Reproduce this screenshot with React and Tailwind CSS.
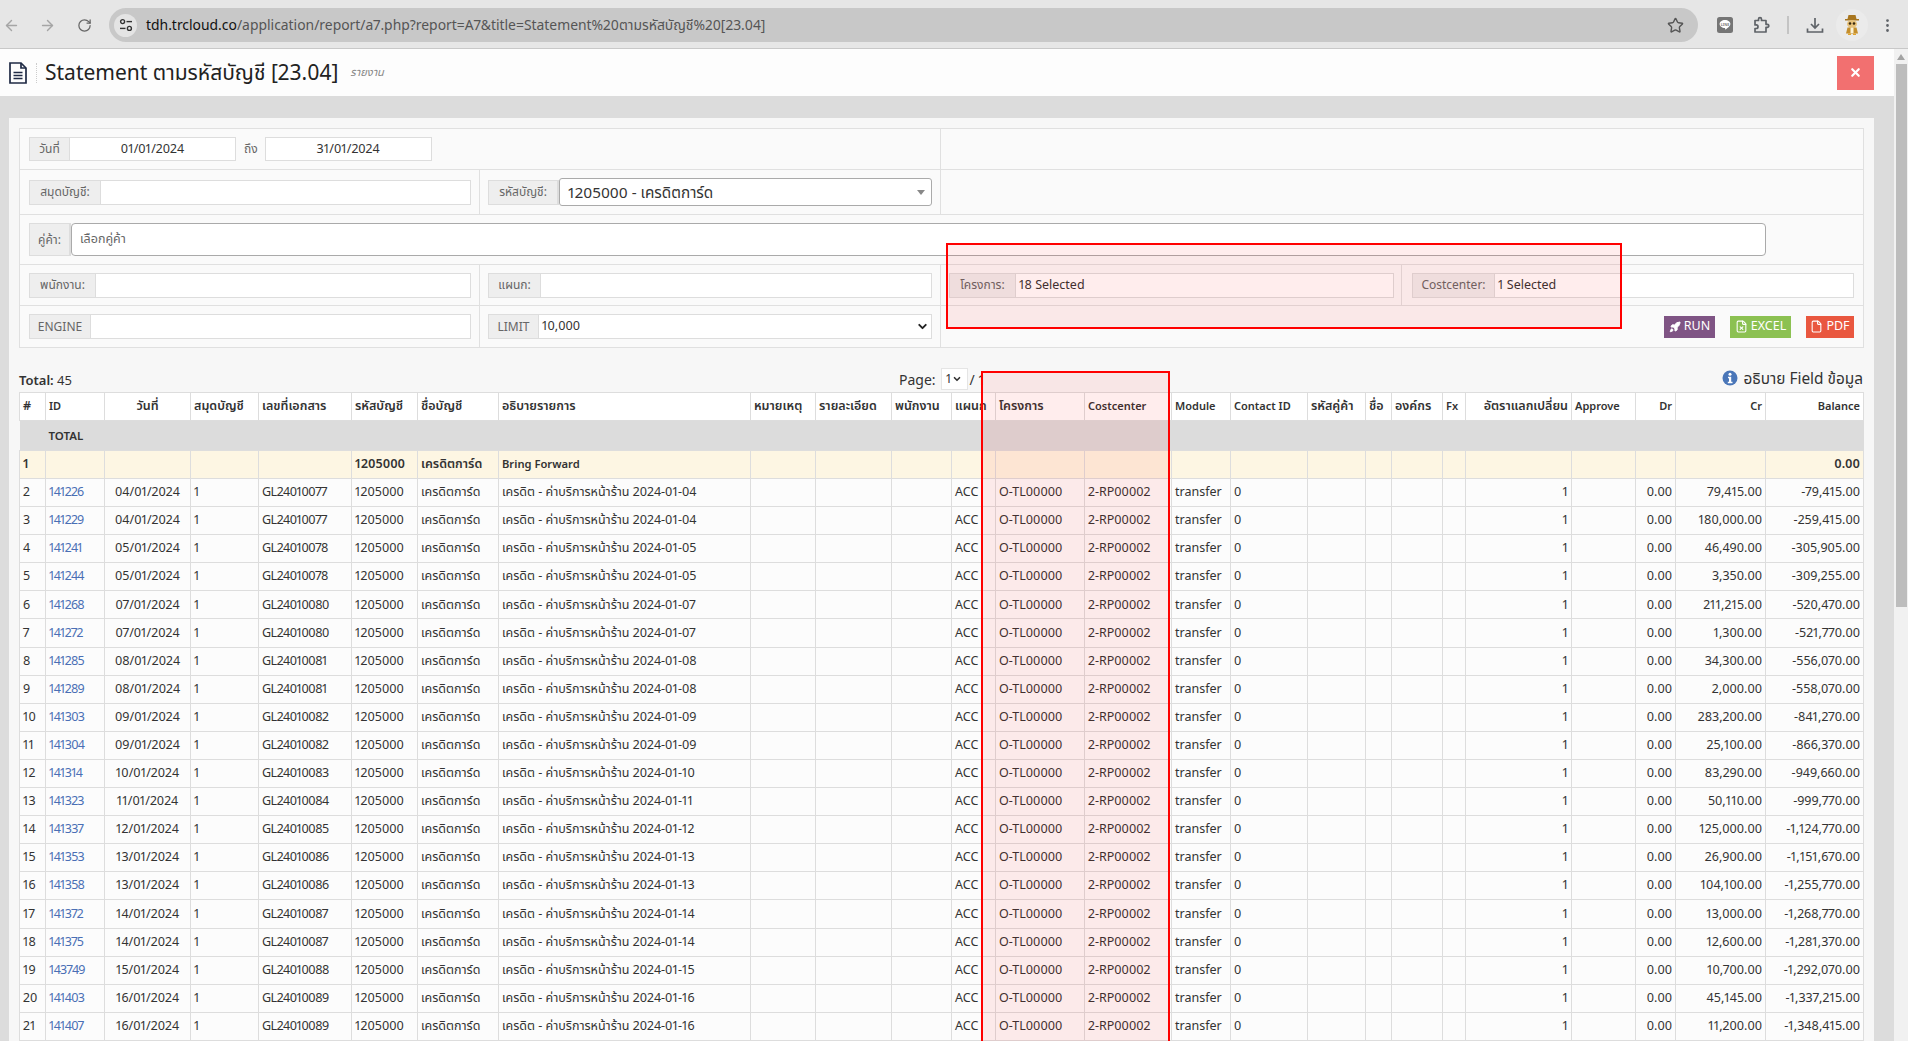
import React from "react";
import {
  ArrowLeft,
  ArrowRight,
  RotateCw,
  Star,
  EllipsisVertical,
  X,
  Rocket,
  FileX,
  File,
  ChevronDown,
} from "lucide-react";

const FONT = "[font-family:'Noto_Sans','Noto_Sans_Thai',sans-serif] proportional-nums";

const columns = [
  { label: "#", w: "w-[26px]" },
  { label: "ID", w: "w-[59px]", size: "text-[11px]" },
  { label: "วันที่", w: "w-[86px]", align: "text-center" },
  { label: "สมุดบัญชี", w: "w-[68px]" },
  { label: "เลขที่เอกสาร", w: "w-[93px]" },
  { label: "รหัสบัญชี", w: "w-[66px]" },
  { label: "ชื่อบัญชี", w: "w-[81px]" },
  { label: "อธิบายรายการ", w: "w-[252px]" },
  { label: "หมายเหตุ", w: "w-[65px]" },
  { label: "รายละเอียด", w: "w-[76px]" },
  { label: "พนักงาน", w: "w-[60px]" },
  { label: "แผนก", w: "w-[44px]" },
  { label: "โครงการ", w: "w-[89px]" },
  { label: "Costcenter", w: "w-[87px]", size: "text-[11px]" },
  { label: "Module", w: "w-[59px]", size: "text-[11px]" },
  { label: "Contact ID", w: "w-[77px]", size: "text-[11px]" },
  { label: "รหัสคู่ค้า", w: "w-[58px]" },
  { label: "ชื่อ", w: "w-[26px]" },
  { label: "องค์กร", w: "w-[51px]" },
  { label: "Fx", w: "w-[23px]", size: "text-[11px]" },
  { label: "อัตราแลกเปลี่ยน", w: "w-[106px]", align: "text-right" },
  { label: "Approve", w: "w-[64px]", size: "text-[11px]" },
  { label: "Dr", w: "w-[40px]", align: "text-right", size: "text-[11px]" },
  { label: "Cr", w: "w-[90px]", align: "text-right", size: "text-[11px]" },
  { label: "Balance", w: "w-[98px]", align: "text-right", size: "text-[11px]" },
];

// id, day, doc suffix, cr, balance
const rows = [
  ["141226", "04", "77", "79,415.00", "-79,415.00"],
  ["141229", "04", "77", "180,000.00", "-259,415.00"],
  ["141241", "05", "78", "46,490.00", "-305,905.00"],
  ["141244", "05", "78", "3,350.00", "-309,255.00"],
  ["141268", "07", "80", "211,215.00", "-520,470.00"],
  ["141272", "07", "80", "1,300.00", "-521,770.00"],
  ["141285", "08", "81", "34,300.00", "-556,070.00"],
  ["141289", "08", "81", "2,000.00", "-558,070.00"],
  ["141303", "09", "82", "283,200.00", "-841,270.00"],
  ["141304", "09", "82", "25,100.00", "-866,370.00"],
  ["141314", "10", "83", "83,290.00", "-949,660.00"],
  ["141323", "11", "84", "50,110.00", "-999,770.00"],
  ["141337", "12", "85", "125,000.00", "-1,124,770.00"],
  ["141353", "13", "86", "26,900.00", "-1,151,670.00"],
  ["141358", "13", "86", "104,100.00", "-1,255,770.00"],
  ["141372", "14", "87", "13,000.00", "-1,268,770.00"],
  ["141375", "14", "87", "12,600.00", "-1,281,370.00"],
  ["143749", "15", "88", "10,700.00", "-1,292,070.00"],
  ["141403", "16", "89", "45,145.00", "-1,337,215.00"],
  ["141407", "16", "89", "11,200.00", "-1,348,415.00"],
];

function Label({ children, w }) {
  return (
    <span className={`flex h-full shrink-0 items-center justify-center border-r border-[#ddd] bg-[#eee] text-[12px] text-[#666] ${w}`}>
      {children}
    </span>
  );
}

function Field({ label, w, h = "h-[25px]", children }) {
  return (
    <div className={`flex w-full items-stretch border border-[#ddd] bg-white ${h}`}>
      <Label w={w}>{label}</Label>
      <div className="flex min-w-0 flex-1 items-center pl-[3px] text-[12.5px] text-[#333]">
        {children}
      </div>
    </div>
  );
}

function Cell({ className = "", children }) {
  return <td className={`overflow-hidden border border-[#ddd] px-[3px] whitespace-nowrap ${className}`}>{children}</td>;
}

function TuneIcon() {
  return (
    <svg width="14" height="14" viewBox="0 0 14 14" fill="none" stroke="#333" strokeWidth="1.4">
      <circle cx="3.6" cy="3.6" r="2" />
      <path d="M7.5 3.6H13" />
      <path d="M1 10.4h5.5" />
      <circle cx="10.4" cy="10.4" r="2" />
    </svg>
  );
}

function LineIcon() {
  return (
    <svg width="16" height="16" viewBox="0 0 16 16" className="ml-[19px]">
      <rect width="16" height="16" rx="2.5" fill="#757575" />
      <path d="M8 3c3 0 5.4 1.8 5.4 4.1 0 2-2.6 4-5 5.7-.3-.8-.2-1.6-.5-1.7C5 11 2.6 9.2 2.6 7.1 2.6 4.800 5 3 8 3z" fill="#fff" />
      <text x="8" y="8.5" textAnchor="middle" fontSize="3.6" fontWeight="700" fill="#757575">LINE</text>
    </svg>
  );
}

function PuzzleIcon() {
  return (
    <svg width="18" height="18" viewBox="0 0 18 18" fill="none" stroke="#5f6368" strokeWidth="1.7" strokeLinejoin="round" className="ml-[19px]">
      <path d="M3 4.500h3.500V3.200a1.500 1.500 0 0 1 3 0v1.300H14v3.800h1.300a1.500 1.500 0 0 1 0 3H14V16H3v-3.500h1.200a1.800 1.800 0 0 0 0-3.600H3z" />
    </svg>
  );
}

function DownloadIcon() {
  return (
    <svg width="18" height="18" viewBox="0 0 18 18" fill="none" stroke="#5f6368" strokeWidth="1.7" className="ml-[17px]">
      <path d="M9 2v9.500M5 8l4 4 4-4" />
      <path d="M1.500 12.500v3.500h15v-3.500" />
    </svg>
  );
}

function AvatarIcon() {
  return (
    <span className="ml-[12px] flex h-[32px] w-[32px] items-center justify-center rounded-full bg-[#ebebeb]">
      <svg width="14" height="20" viewBox="0 0 14 20">
        <path d="M3.500 0h7l1 4H14v1.500H0V4h2.500z" fill="#a8761f" />
        <ellipse cx="7" cy="9" rx="5" ry="4" fill="#e7c27a" />
        <circle cx="5" cy="8.500" r="1.300" fill="#3a2a10" />
        <circle cx="9" cy="8.500" r="1.300" fill="#3a2a10" />
        <path d="M2.500 12.500h9l1.500 6H1z" fill="#c58f2c" />
        <path d="M5.500 12.500h3V18h-3z" fill="#fbf3d8" />
        <path d="M3 18.500h3V20H3zM8 18.500h3V20H8z" fill="#dfa32c" />
      </svg>
    </span>
  );
}

function InfoIcon() {
  return (
    <svg width="16" height="16" viewBox="0 0 16 16">
      <circle cx="8" cy="8" r="7.500" fill="#4a76b8" />
      <circle cx="8" cy="4.300" r="1.500" fill="#fff" />
      <path d="M6 6.800h3.200v5H10.500v1.500h-4.700v-1.500H7v-3.500H6z" fill="#fff" />
    </svg>
  );
}

function BrowserBar() {
  return (
    <div className="flex h-[49px] items-start border-b border-[#c8c8c8] bg-[#e6e6e6] pt-[8px]">
      <div className="flex h-[34px] w-[109px] items-center">
        <ArrowLeft size={17} className="ml-[3px] text-[#a5a5a5]" />
        <ArrowRight size={17} className="ml-[19px] text-[#a5a5a5]" />
        <RotateCw size={15} className="ml-[21px] text-[#666]" />
      </div>
      <div className="flex h-[34px] w-[1589px] items-center rounded-full bg-[#c8c8c8]">
        <span className="ml-[5px] flex h-[23px] w-[23px] items-center justify-center rounded-full bg-[#e4e4e4]">
          <TuneIcon />
        </span>
        <span className="ml-[9px] text-[13.9px] text-[#555]">
          <span className="text-[#111]">tdh.trcloud.co</span>/application/report/a7.php?report=A7&amp;title=Statement%20ตามรหัสบัญชี%20[23.04]
        </span>
        <Star size={17} className="ml-auto mr-[14px] text-[#555]" />
      </div>
      <div className="flex h-[34px] flex-1 items-center text-[#5f6368]">
        <LineIcon />
        <PuzzleIcon />
        <span className="ml-[17px] h-[18px] w-[2px] bg-[#c4c4c4]" />
        <DownloadIcon />
        <AvatarIcon />
        <EllipsisVertical size={17} className="ml-[11px]" />
      </div>
    </div>
  );
}

export default function App() {
  return (
    <div className={`relative h-[1041px] w-[1908px] overflow-hidden bg-[#dcdcdc] ${FONT}`}>
      <BrowserBar />

      <div className="flex h-[992px]">
        <div className="w-[1894px]">
          {/* page header */}
          <div className="flex h-[48px] items-center border-b border-[#dcdcdc] bg-[#fdfdfd]">
            <svg width="20" height="22" viewBox="0 0 20 22" className="ml-[8px] text-[#1f2a44]" fill="none" stroke="currentColor" strokeWidth="1.7">
              <path d="M2 1h11l5 5v15H2z" />
              <path d="M13 1v5h5" />
              <path d="M5.500 10.500h9M5.500 13.500h9M5.500 16.500h9" />
            </svg>
            <span className="ml-[8px] h-[20px] border-l border-dotted border-[#ccc]" />
            <h1 className="ml-[8px] text-[21px] text-[#222]">Statement ตามรหัสบัญชี [23.04]</h1>
            <span className="ml-[12px] text-[11px] text-[#888] italic">รายงาน</span>
            <button className="ml-auto mr-[20px] flex h-[34px] w-[37px] items-center justify-center bg-[#f27070] text-white">
              <X size={13} strokeWidth={4} />
            </button>
          </div>

          <div className="h-[21px]" />

          <div className="ml-[9px] h-[923px] w-[1865px] bg-[#f7f7f7] pl-[10px] pt-[10px] text-[#333]">
            {/* filters */}
            <div className="w-[1845px] border border-[#e0e0e0] bg-[#fafafa]">
              <div className="flex h-[41px] border-b border-[#e0e0e0]">
                <div className="flex w-[921px] items-center border-r border-[#e0e0e0] pl-[9px] text-[12.5px]">
                  <div className="flex h-[24px] w-[207px] border border-[#ddd] bg-white">
                    <Label w="w-[40px]">วันที่</Label>
                    <span className="flex flex-1 items-center justify-center">01/01/2024</span>
                  </div>
                  <span className="ml-[8px] mr-[7px] text-[12px] text-[#666]">ถึง</span>
                  <span className="flex h-[24px] w-[167px] items-center justify-center border border-[#ddd] bg-white">31/01/2024</span>
                </div>
              </div>

              <div className="flex h-[45px] border-b border-[#e0e0e0]">
                <div className="flex w-[460px] items-center border-r border-[#e0e0e0] pl-[9px] pr-[8px]">
                  <Field label="สมุดบัญชี:" w="w-[71px]" />
                </div>
                <div className="flex w-[461px] items-center border-r border-[#e0e0e0] pl-[8px] pr-[8px]">
                  <div className="flex h-[25px] w-[71px] shrink-0 border border-[#ddd]">
                    <Label w="w-full">รหัสบัญชี:</Label>
                  </div>
                  <div className="flex h-[28px] flex-1 items-center justify-between rounded-[3px] border border-[#aaa] bg-white pl-[8px] pr-[6px] text-[15.3px]">
                    1205000 - เครดิตการ์ด
                    <span className="h-0 w-0 border-x-[4px] border-t-[5px] border-x-transparent border-t-[#888]" />
                  </div>
                </div>
              </div>

              <div className="flex h-[50px] items-center border-b border-[#e0e0e0] pl-[9px]">
                <div className="flex h-[33px] w-[42px] border border-[#ddd]">
                  <Label w="w-full">คู่ค้า:</Label>
                </div>
                <div className="flex h-[33px] w-[1695px] items-center rounded-[4px] border border-[#aaa] bg-white pl-[8px] text-[12.5px] text-[#666]">
                  เลือกคู่ค้า
                </div>
              </div>

              <div className="flex h-[41px] border-b border-[#e0e0e0]">
                <div className="flex w-[460px] items-center border-r border-[#e0e0e0] pl-[9px] pr-[8px]">
                  <Field label="พนักงาน:" w="w-[66px]" />
                </div>
                <div className="flex w-[461px] items-center border-r border-[#e0e0e0] pl-[8px] pr-[8px]">
                  <Field label="แผนก:" w="w-[52px]" />
                </div>
                <div className="flex w-[461px] items-center border-r border-[#e0e0e0] pl-[8px] pr-[7px]">
                  <Field label="โครงการ:" w="w-[66px]">18 Selected</Field>
                </div>
                <div className="flex flex-1 items-center pl-[10px] pr-[9px]">
                  <Field label="Costcenter:" w="w-[82px]">1 Selected</Field>
                </div>
              </div>

              <div className="flex h-[41px]">
                <div className="flex w-[460px] items-center border-r border-[#e0e0e0] pl-[9px] pr-[8px]">
                  <Field label="ENGINE" w="w-[61px]" />
                </div>
                <div className="flex w-[461px] items-center border-r border-[#e0e0e0] pl-[8px] pr-[8px]">
                  <Field label="LIMIT" w="w-[50px]">
                    <span className="flex-1">10,000</span>
                    <ChevronDown size={13} strokeWidth={3.5} className="mr-[2px] text-[#222]" />
                  </Field>
                </div>
                <div className="flex flex-1 items-center justify-end gap-[15px] pr-[9px] text-[12.5px] text-white">
                  <button className="flex h-[22px] w-[51px] items-center justify-center gap-[3px] bg-[#7f5484]">
                    <Rocket size={12} fill="currentColor" />
                    RUN
                  </button>
                  <button className="flex h-[22px] w-[61px] items-center justify-center gap-[3px] bg-[#8cc152]">
                    <FileX size={13} />
                    EXCEL
                  </button>
                  <button className="flex h-[22px] w-[48px] items-center justify-center gap-[3px] bg-[#e9573f]">
                    <File size={13} />
                    PDF
                  </button>
                </div>
              </div>
            </div>

            {/* summary line */}
            <div className="flex h-[44px] w-[1844px] items-end pb-[2px] text-[13px]">
              <span className="w-[880px]">
                <b className="font-semibold">Total:</b> 45
              </span>
              <span className="flex items-center text-[14px]">
                Page:
                <span className="ml-[5px] flex h-[22px] w-[27px] items-center justify-center gap-[1px] border border-[#e5e5e5] bg-white text-[12px]">
                  1<ChevronDown size={10} strokeWidth={4} />
                </span>
                <span className="ml-[2px]">/ 1</span>
              </span>
              <span className="ml-auto flex items-center gap-[6px] text-[15.4px]">
                <InfoIcon />
                อธิบาย Field ข้อมูล
              </span>
            </div>

            {/* report table */}
            <table className="w-[1844px] table-fixed border-collapse text-[12.5px]">
              <colgroup>
                {columns.map((c) => (
                  <col key={c.label} className={c.w} />
                ))}
              </colgroup>
              <thead>
                <tr className="h-[28px] bg-white">
                  {columns.map((c) => (
                    <th key={c.label} className={`overflow-hidden border border-[#ddd] px-[3px] font-semibold whitespace-nowrap ${c.align || "text-left"} ${c.size || ""}`}>
                      {c.label}
                    </th>
                  ))}
                </tr>
              </thead>
              <tbody>
                <tr className="h-[30px] bg-[#dcdcdc] font-semibold">
                  <td className="px-[3px]" />
                  <td className="px-[3px] text-[11.5px]" colSpan={24}>TOTAL</td>
                </tr>
                <tr className="h-[28px] bg-[#fdf6e3] font-semibold">
                  {columns.map((c, i) => (
                    <Cell key={c.label} className={i === 24 ? "text-right" : ""}>
                      {i === 0 && "1"}
                      {i === 5 && "1205000"}
                      {i === 6 && "เครดิตการ์ด"}
                      {i === 7 && <span className="text-[11.2px]">Bring Forward</span>}
                      {i === 24 && "0.00"}
                    </Cell>
                  ))}
                </tr>
                {rows.map(([id, day, doc, cr, bal], i) => (
                  <tr key={id} className="h-[28.1px] bg-[#fcfcfc]">
                    <Cell>{i + 2}</Cell>
                    <Cell className="tracking-[-0.8px] text-[#4a6fb5]">{id}</Cell>
                    <Cell className="text-center">{day}/01/2024</Cell>
                    <Cell>1</Cell>
                    <Cell className="tracking-[-0.5px]">GL240100{doc}</Cell>
                    <Cell>1205000</Cell>
                    <Cell>เครดิตการ์ด</Cell>
                    <Cell>เครดิต - ค่าบริการหน้าร้าน 2024-01-{day}</Cell>
                    <Cell />
                    <Cell />
                    <Cell />
                    <Cell>ACC</Cell>
                    <Cell>O-TL00000</Cell>
                    <Cell>2-RP00002</Cell>
                    <Cell>transfer</Cell>
                    <Cell>0</Cell>
                    <Cell />
                    <Cell />
                    <Cell />
                    <Cell />
                    <Cell className="text-right">1</Cell>
                    <Cell />
                    <Cell className="text-right">0.00</Cell>
                    <Cell className="text-right">{cr}</Cell>
                    <Cell className="text-right">{bal}</Cell>
                  </tr>
                ))}
              </tbody>
            </table>
          </div>
        </div>

        {/* page scrollbar */}
        <div className="w-[14px] bg-[#f1f1f1]">
          <div className="mx-auto mt-[5px] h-0 w-0 border-x-[4px] border-b-[6px] border-x-transparent border-b-[#a3a3a3]" />
          <div className="mt-[4px] ml-[2px] h-[543px] w-[11px] bg-[#bdbdbd]" />
        </div>
      </div>

      {/* red highlight annotations */}
      <div className="absolute left-[946px] top-[243px] h-[86px] w-[676px] border-[2px] border-[#f00] bg-[#f00]/[0.07]" />
      <div className="absolute left-[981px] top-[371px] h-[680px] w-[189px] border-[2px] border-[#f00] bg-[#f00]/[0.07]" />
    </div>
  );
}
